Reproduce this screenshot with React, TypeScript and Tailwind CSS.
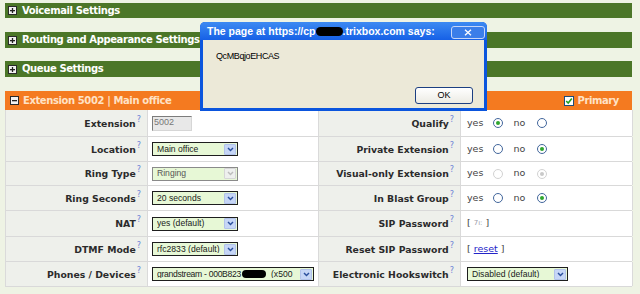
import React from 'react';

const labelFont = "font-['DejaVu_Sans',sans-serif] font-bold text-[9.3px] text-[#2b2b2b]";
const valueFont = "font-['DejaVu_Sans',sans-serif] text-[9.5px] text-[#444]";
const selectFont = "font-['Liberation_Sans',sans-serif] text-[8.6px] text-[#1a1a1a]";
const barFont = "font-['DejaVu_Sans',sans-serif] font-bold text-[10px] tracking-[-0.4px] leading-none";

function Help() {
  return <span className="font-normal text-[8px] text-[#6b7fd6] relative -top-[4px] ml-[1px]">?</span>;
}

function PlusBox({ minus }: { minus?: boolean }) {
  return (
    <span className="w-[9px] h-[9px] bg-[#f2f2f2] border border-[#2a2a2a] flex items-center justify-center shrink-0">
      <svg width="7" height="7" viewBox="0 0 7 7">
        <rect x="1" y="3" width="5" height="1.3" fill="#222" />
        {!minus && <rect x="2.85" y="1" width="1.3" height="5" fill="#222" />}
      </svg>
    </span>
  );
}

function SectionBar({ title, className }: { title: string; className: string }) {
  return (
    <div className={`h-[15px] w-[627px] bg-[#4b7628] flex items-center pl-[3px] gap-[5px] ${className}`}>
      <PlusBox />
      <span className={`${barFont} text-white`}>{title}</span>
    </div>
  );
}

function Arrow({ disabled }: { disabled?: boolean }) {
  return (
    <span className={`w-[12px] h-[11px] flex items-center justify-center rounded-[1px] shrink-0 ${disabled ? 'bg-[#eef0ee] border border-[#d6d6d6]' : 'bg-[#c6d6f6] border border-[#b2c3ea]'}`}>
      <svg width="7" height="5" viewBox="0 0 7 5">
        <path d="M1 1 L3.5 3.6 L6 1" fill="none" stroke={disabled ? '#bcbcbc' : '#2a4f9c'} strokeWidth="1.4" />
      </svg>
    </span>
  );
}

function Select({ w, disabled, children }: { w: string; disabled?: boolean; children: React.ReactNode }) {
  return (
    <div className={`h-[14px] ${w} flex items-center border ${disabled ? 'border-[#8a8a8a]' : 'border-[#1e1e1e]'} bg-[#e7f8d6] pl-[4px] pr-[1px]`}>
      <span className={`flex-1 flex items-center overflow-hidden whitespace-nowrap leading-none ${selectFont}`}>{children}</span>
      <Arrow disabled={disabled} />
    </div>
  );
}

function Radio({ checked, disabled }: { checked?: boolean; disabled?: boolean }) {
  return (
    <span className={`w-[10px] h-[10px] rounded-full border bg-white flex items-center justify-center ${disabled ? 'border-[#d2d2d2]' : 'border-[#42669c]'}`}>
      {checked && <span className={`w-[4px] h-[4px] rounded-full ${disabled ? 'bg-[#c9c9c9]' : 'bg-[#2fa62f]'}`} />}
    </span>
  );
}

function YesNo({ yes, disabled }: { yes: boolean; disabled?: boolean }) {
  return (
    <div className={`flex items-center ${valueFont}`}>
      <span>yes</span>
      <span className="ml-[10px]"><Radio checked={yes} disabled={disabled} /></span>
      <span className="ml-[10px]">no</span>
      <span className="ml-[12px]"><Radio checked={!yes} disabled={disabled} /></span>
    </div>
  );
}

function Label({ text }: { text: string }) {
  return (
    <div className={`flex items-center justify-end pr-[6px] pt-[1px] bg-[#eef0eb] border-r border-[#dadada] ${labelFont}`}>
      <span>{text}</span>
      <Help />
    </div>
  );
}

function Value({ children }: { children: React.ReactNode }) {
  return <div className="flex items-center pl-[4px] bg-white border-r border-[#dadada]">{children}</div>;
}

const rows: { h: string; l1: string; v1: React.ReactNode; l2: string; v2: React.ReactNode }[] = [
  {
    h: 'h-[27px]',
    l1: 'Extension',
    v1: (
      <div className="w-[40px] h-[15px] bg-[#e8e8e8] border-t border-l border-[#7c7c7c] border-b border-r border-b-[#d6d6d6] border-r-[#d6d6d6] flex items-center pl-[1px] font-['Liberation_Sans',sans-serif] text-[9px] text-[#777]">5002</div>
    ),
    l2: 'Qualify',
    v2: <YesNo yes />,
  },
  {
    h: 'h-[25px]',
    l1: 'Location',
    v1: <Select w="w-[86px]">Main office</Select>,
    l2: 'Private Extension',
    v2: <YesNo yes={false} />,
  },
  {
    h: 'h-[24px]',
    l1: 'Ring Type',
    v1: <Select w="w-[86px]" disabled><span className="text-[#555]">Ringing</span></Select>,
    l2: 'Visual-only Extension',
    v2: <YesNo yes={false} disabled />,
  },
  {
    h: 'h-[25px]',
    l1: 'Ring Seconds',
    v1: <Select w="w-[86px]">20 seconds</Select>,
    l2: 'In Blast Group',
    v2: <YesNo yes={false} />,
  },
  {
    h: 'h-[26px]',
    l1: 'NAT',
    v1: <Select w="w-[86px]">yes (default)</Select>,
    l2: 'SIP Password',
    v2: (
      <div className={`flex items-center ${valueFont}`}>
        <span>[</span>
        <span className="mx-[3px] text-[7px] text-[#9a9aa8]">7ı:</span>
        <span>]</span>
      </div>
    ),
  },
  {
    h: 'h-[25px]',
    l1: 'DTMF Mode',
    v1: <Select w="w-[86px]">rfc2833 (default)</Select>,
    l2: 'Reset SIP Password',
    v2: (
      <div className={`flex items-center ${valueFont}`}>
        <span>[</span>
        <span className="mx-[3px] text-[#2424c8] underline">reset</span>
        <span>]</span>
      </div>
    ),
  },
  {
    h: 'h-[25px]',
    l1: 'Phones / Devices',
    v1: (
      <Select w="w-[162px]">
        <span className="tracking-[-0.3px]">grandstream - 000B823</span>
        <span className="inline-block w-[24px] h-[8px] bg-black rounded-full ml-[1px]" />
        <span className="ml-[5px]">(x500</span>
      </Select>
    ),
    l2: 'Electronic Hookswitch',
    v2: <Select w="w-[101px]">Disabled (default)</Select>,
  },
];

export default function App() {
  return (
    <div className="relative w-[640px] h-[294px] overflow-hidden bg-[#eef3e4] pl-[5px] pt-[3px]">
      <SectionBar title="Voicemail Settings" className="" />
      <SectionBar title="Routing and Appearance Settings" className="mt-[14px] h-[16px]" />
      <SectionBar title="Queue Settings" className="mt-[13px] h-[16px]" />

      <div className="mt-[14px] h-[19px] w-[627px] bg-[#f47a20] flex items-center pl-[5px] pr-[13px]">
        <PlusBox minus />
        <span className={`ml-[4px] ${barFont} text-[#ffe2c6]`}>Extension 5002 | Main office</span>
        <span className="ml-auto w-[10px] h-[10px] bg-white border border-[#1e4d7c] flex items-center justify-center">
          <svg width="8" height="8" viewBox="0 0 8 8">
            <path d="M1.2 4 L3.2 6 L6.8 1.6" fill="none" stroke="#22a022" strokeWidth="1.6" />
          </svg>
        </span>
        <span className={`ml-[3px] ${barFont} text-[#ffe2c6]`}>Primary</span>
      </div>

      <div className="w-[627px] border-l border-[#dadada]">
        {rows.map((r) => (
          <div key={r.l1} className={`grid grid-cols-[142px_171px_142px_172px] border-b border-[#d9d9d9] ${r.h}`}>
            <Label text={r.l1} />
            <Value>{r.v1}</Value>
            <Label text={r.l2} />
            <Value><span className="pl-[2px] flex">{r.v2}</span></Value>
          </div>
        ))}
      </div>

      {/* browser alert */}
      <div className="absolute left-[200px] top-[22px] w-[287px] h-[89px] flex flex-col bg-[#0b55dd] rounded-t-[5px] p-[3px] pt-0">
        <div className="h-[18px] flex items-center bg-linear-to-b from-[#3d8af2] to-[#1660e6] -mx-[3px] pl-[7px] pr-[2px] rounded-t-[5px]">
          <span className="flex items-center font-['Liberation_Sans',sans-serif] font-bold text-[10.5px] text-white leading-none whitespace-nowrap">
            <span>The page at https://cp</span>
            <span className="inline-block w-[27px] h-[9px] bg-black rounded-full" />
            <span>.trixbox.com says:</span>
          </span>
          <span className="ml-auto w-[34px] h-[13px] border border-[#c6d6f8] rounded-[3px] bg-[#3b7ee9] flex items-center justify-center mt-[2px]">
            <svg width="8" height="7" viewBox="0 0 8 7">
              <path d="M1 0.8 L7 6.2 M7 0.8 L1 6.2" stroke="#fff" strokeWidth="1.3" />
            </svg>
          </span>
        </div>
        <div className="flex-1 bg-[#ece9d8] flex flex-col pl-[13px] pt-[12px] pr-[11px] pb-[4px]">
          <span className="font-['Liberation_Sans',sans-serif] text-[9px] tracking-[-0.4px] text-black leading-none">QcMBqjoEHCAS</span>
          <button className="mt-auto self-end w-[58px] h-[17px] rounded-[3px] border border-[#1c3f82] bg-linear-to-b from-white to-[#ecebe4] font-['Liberation_Sans',sans-serif] text-[9px] text-black leading-none">OK</button>
        </div>
      </div>
    </div>
  );
}
